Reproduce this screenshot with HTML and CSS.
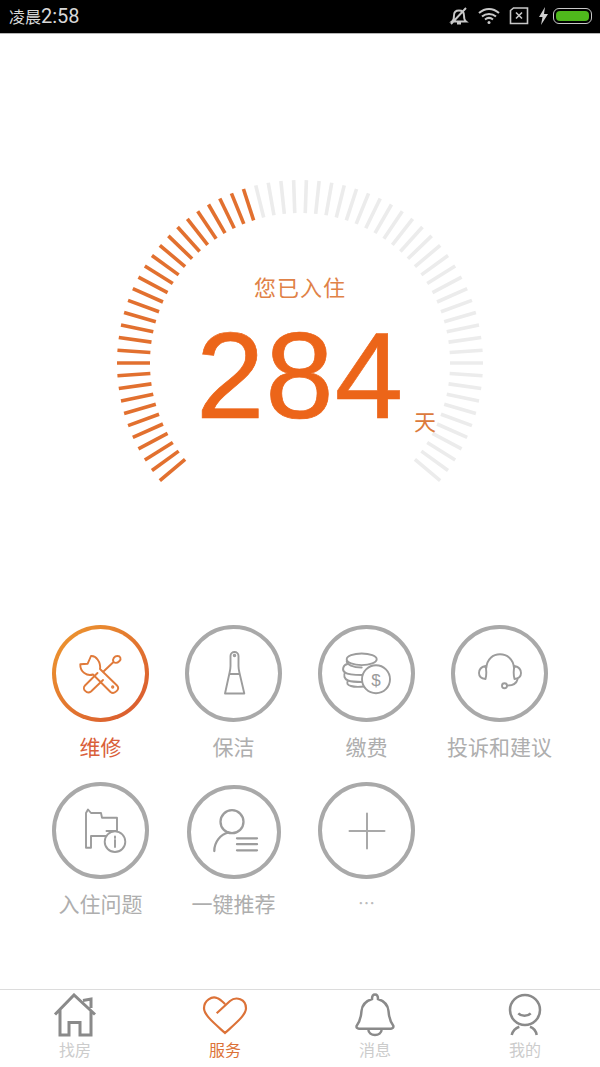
FILE: index.html
```html
<!DOCTYPE html>
<html lang="zh-CN">
<head>
    <meta charset="UTF-8">
    <meta name="viewport" content="width=device-width, initial-scale=1.0">
    <title>服务</title>
    <link rel="stylesheet" href="styles.css">
</head>
<body>
    <div class="statusbar">
        <div class="time"><span class="time-cn">凌晨</span>2:58</div>
        <div class="status-icons">
            <svg width="20" height="20" viewBox="0 0 20 20" class="st-icon st-bell">
                <path d="M3 15.500c2-1.500 2-3.500 2-6 0-3 2-5 5-5s5 2 5 5c0 2.500 0 4.500 2 6z M8 17.500h4 M2 18 17 2"/>
            </svg>
            <svg width="22" height="20" viewBox="0 0 22 20" class="st-icon st-wifi">
                <path d="M1 7c6-5.500 14-5.500 20 0 M4 10.500c4-3.500 10-3.500 14 0 M7 13.500c2.500-2 5.500-2 8 0"/>
                <circle cx="11" cy="16.500" r="1.500" class="st-fill"/>
            </svg>
            <svg width="20" height="20" viewBox="0 0 20 20" class="st-icon st-sim">
                <path d="M1.500 4.500 4.500 2h14v15.500h-17z M7 6.500l6 6 M13 6.500l-6 6"/>
            </svg>
            <svg width="9" height="18" viewBox="0 0 9 18" class="st-bolt">
                <path d="M6 0 0 10h3.500L2 18l7-11H5z"/>
            </svg>
            <div class="battery"><div class="battery-fill"></div></div>
        </div>
    </div>

    <div class="main">
        <div class="gauge">
            <svg class="gauge-ticks" width="600" height="500" viewBox="0 0 600 500">
                <defs>
                    <line id="tick" x1="-183" y1="0" x2="-150" y2="0"/>
                </defs>
                <g transform="translate(300 329)">
                    <g class="ticks-on">
                        <use href="#tick" transform="rotate(-40)"/><use href="#tick" transform="rotate(-36)"/>
                        <use href="#tick" transform="rotate(-32)"/><use href="#tick" transform="rotate(-28)"/>
                        <use href="#tick" transform="rotate(-24)"/><use href="#tick" transform="rotate(-20)"/>
                        <use href="#tick" transform="rotate(-16)"/><use href="#tick" transform="rotate(-12)"/>
                        <use href="#tick" transform="rotate(-8)"/><use href="#tick" transform="rotate(-4)"/>
                        <use href="#tick" transform="rotate(0)"/><use href="#tick" transform="rotate(4)"/>
                        <use href="#tick" transform="rotate(8)"/><use href="#tick" transform="rotate(12)"/>
                        <use href="#tick" transform="rotate(16)"/><use href="#tick" transform="rotate(20)"/>
                        <use href="#tick" transform="rotate(24)"/><use href="#tick" transform="rotate(28)"/>
                        <use href="#tick" transform="rotate(32)"/><use href="#tick" transform="rotate(36)"/>
                        <use href="#tick" transform="rotate(40)"/><use href="#tick" transform="rotate(44)"/>
                        <use href="#tick" transform="rotate(48)"/><use href="#tick" transform="rotate(52)"/>
                        <use href="#tick" transform="rotate(56)"/><use href="#tick" transform="rotate(60)"/>
                        <use href="#tick" transform="rotate(64)"/><use href="#tick" transform="rotate(68)"/>
                        <use href="#tick" transform="rotate(72)"/>
                    </g>
                    <g class="ticks-off">
                        <use href="#tick" transform="rotate(76)"/><use href="#tick" transform="rotate(80)"/>
                        <use href="#tick" transform="rotate(84)"/><use href="#tick" transform="rotate(88)"/>
                        <use href="#tick" transform="rotate(92)"/><use href="#tick" transform="rotate(96)"/>
                        <use href="#tick" transform="rotate(100)"/><use href="#tick" transform="rotate(104)"/>
                        <use href="#tick" transform="rotate(108)"/><use href="#tick" transform="rotate(112)"/>
                        <use href="#tick" transform="rotate(116)"/><use href="#tick" transform="rotate(120)"/>
                        <use href="#tick" transform="rotate(124)"/><use href="#tick" transform="rotate(128)"/>
                        <use href="#tick" transform="rotate(132)"/><use href="#tick" transform="rotate(136)"/>
                        <use href="#tick" transform="rotate(140)"/><use href="#tick" transform="rotate(144)"/>
                        <use href="#tick" transform="rotate(148)"/><use href="#tick" transform="rotate(152)"/>
                        <use href="#tick" transform="rotate(156)"/><use href="#tick" transform="rotate(160)"/>
                        <use href="#tick" transform="rotate(164)"/><use href="#tick" transform="rotate(168)"/>
                        <use href="#tick" transform="rotate(172)"/><use href="#tick" transform="rotate(176)"/>
                        <use href="#tick" transform="rotate(180)"/><use href="#tick" transform="rotate(184)"/>
                        <use href="#tick" transform="rotate(188)"/><use href="#tick" transform="rotate(192)"/>
                        <use href="#tick" transform="rotate(196)"/><use href="#tick" transform="rotate(200)"/>
                        <use href="#tick" transform="rotate(204)"/><use href="#tick" transform="rotate(208)"/>
                        <use href="#tick" transform="rotate(212)"/><use href="#tick" transform="rotate(216)"/>
                        <use href="#tick" transform="rotate(220)"/>
                    </g>
                </g>
            </svg>
            <div class="gauge-label">您已入住</div>
            <div class="gauge-days">284</div>
            <div class="gauge-unit">天</div>
        </div>

        <div class="services">
            <div class="service active">
                <div class="circle">
                    <svg width="48" height="48" viewBox="0 0 48 48" class="line-icon">
                        <path d="M14 6C19 5.500 24 12 23 19L40 35.500c3.500 3.500-2.500 9.500-6.500 6.500L16 24.500C10 26.500 3 22 3.300 14.300L10.700 13.700z"/>
                        <path d="M20.500 23 8 35.500c-3.500 3.500 2 9 6 6L26 30 M26.500 21.500 36.500 12 M36.500 12c-1.500-3 1-6 4-6s4 3 2 5-4 2.500-6 1z"/>
                        <circle cx="35.700" cy="37" r=".7"/>
                    </svg>
                </div>
                <div class="service-name">维修</div>
            </div>
            <div class="service">
                <div class="circle">
                    <svg width="48" height="48" viewBox="0 0 48 48" class="line-icon">
                        <path d="M20.500 6a4 4 0 0 1 8 0v10c0 3 .5 5 1 7l4.800 20.500H15L19.500 23c.5-2 1-4 1-7z M19.500 24h10"/>
                        <circle cx="24.500" cy="5.500" r=".8"/>
                    </svg>
                </div>
                <div class="service-name">保洁</div>
            </div>
            <div class="service">
                <div class="circle">
                    <svg width="50" height="50" viewBox="0 0 50 50" class="line-icon">
                        <ellipse cx="19.700" cy="10.300" rx="15" ry="5.800"/>
                        <path d="M4.700 12c0 3.500 6 6.500 15 6.500"/>
                        <path d="M5.500 15C1 16 -.5 21 3 23.500 5 25 12 26 20 26"/>
                        <path d="M3 23.500C1.500 26 2 30 6 31.500 9 32.500 14 33 20 33"/>
                        <path d="M6 31.500C4.500 34 5 36 9 37 12 38 17 38 22 37.500"/>
                        <circle cx="34" cy="30.300" r="14" class="coin"/>
                        <text x="34" y="36.500" class="coin-sign">$</text>
                    </svg>
                </div>
                <div class="service-name">缴费</div>
            </div>
            <div class="service">
                <div class="circle">
                    <svg width="50" height="50" viewBox="0 0 50 50" class="line-icon">
                        <path d="M11.300 19C12 10 18 5.300 25 5.300S38.300 10 39 19"/>
                        <path d="M10.500 17C6 18 4 21 4 24s2 5.500 6.500 6c1-4 1-9 0-13z M39.500 17c4.500 1 6.500 4 6.500 7s-2 5.500-6.500 6c-1-4-1-9 0-13z"/>
                        <path d="M42.500 30.500c-1 4-5 6-10 6"/>
                        <circle cx="29.500" cy="36.700" r="2.500"/>
                    </svg>
                </div>
                <div class="service-name">投诉和建议</div>
            </div>
            <div class="service">
                <div class="circle">
                    <svg width="48" height="48" viewBox="0 0 48 48" class="line-icon">
                        <path d="M9 6 11 2.500 14 6h10l1 4.700h15V24H29.500 M29 29H14v11.700H9V6"/>
                        <circle cx="38" cy="34.700" r="10.300"/>
                        <path d="M38 33v7 M38 29.500v1.500"/>
                    </svg>
                </div>
                <div class="service-name">入住问题</div>
            </div>
            <div class="service">
                <div class="circle small">
                    <svg width="48" height="48" viewBox="0 0 48 48" class="line-icon icon-bold">
                        <circle cx="22" cy="13.700" r="11.500"/>
                        <path d="M4.300 43c0-9 6-16.500 14-18.500 M27 30.300h20 M27 36.200h20 M27 42.300h20"/>
                    </svg>
                </div>
                <div class="service-name">一键推荐</div>
            </div>
            <div class="service">
                <div class="circle">
                    <svg width="40" height="40" viewBox="0 0 40 40" class="line-icon icon-plus">
                        <path d="M2.500 20h35 M20 2.500v35"/>
                    </svg>
                </div>
                <div class="service-name service-more">⋯</div>
            </div>
        </div>
    </div>

    <div class="tabbar">
        <div class="tab">
            <svg width="50" height="44" viewBox="0 0 50 44" class="tab-icon">
                <path d="M5 21.500 24 2l21 19.500 M10 17v25h9V29.500h11V42h11V17 M33 7.500l8-1.500v9"/>
            </svg>
            <div class="tab-name">找房</div>
        </div>
        <div class="tab active">
            <svg width="50" height="44" viewBox="0 0 50 44" class="tab-icon">
                <path d="M16.700 20.300 30 8c6-5 16-2 16 7.300C46 22 36 30 25 40 14 30 4 22 4 15.300 4 7 12 3 17 5c3 1 6 4 8 6"/>
            </svg>
            <div class="tab-name">服务</div>
        </div>
        <div class="tab">
            <svg width="50" height="44" viewBox="0 0 50 44" class="tab-icon tab-icon-thin">
                <path d="M22 6c0-6 6-6 6 0 6 2 10 6 10.500 12 .5 6 1 10 4.800 14.700 .5 2-1 3-2.300 3H9c-1.500 0-3-1-2.300-3C10.500 28 11 24 11.500 18 12 12 16 8 22 6z"/>
                <path d="M18.300 36c0 8 13.400 8 13.400 0"/>
            </svg>
            <div class="tab-name">消息</div>
        </div>
        <div class="tab">
            <svg width="50" height="44" viewBox="0 0 50 44" class="tab-icon tab-icon-thin">
                <circle cx="25" cy="17" r="15"/>
                <path d="M18.300 20.300c3 3.200 9.400 3.200 12.400 0 M11.700 42c1-4 4-7 7.600-8.300 M30 33.700c3.600 1.300 6 4.300 6.700 8.300"/>
            </svg>
            <div class="tab-name">我的</div>
        </div>
    </div>
</body>
</html>
```

FILE: styles.css
```css
* {
    box-sizing: border-box;
}
body {
    margin: 0;
    padding: 0;
    height: 1067px;
    display: flex;
    flex-direction: column;
    background-color: white;
    font-family: "Liberation Sans", "Noto Sans CJK SC", sans-serif;
    overflow: hidden;
}

/* status bar */
.statusbar {
    height: 34px;
    flex: none;
    display: flex;
    justify-content: space-between;
    align-items: center;
    padding: 0 8px 1px 9px;
    background-color: black;
    border-bottom: 1px solid #b5b5b5;
}
.time {
    font-family: Roboto, "Noto Sans CJK SC", sans-serif;
    font-size: 20px;
    color: #d8d8d8;
}
.time-cn {
    font-size: 16px;
}
.status-icons {
    display: flex;
    align-items: center;
    gap: 9px;
}
.st-icon {
    fill: none;
    stroke: #c8c8c8;
    stroke-width: 1.6;
}
.st-bell {
    stroke-width: 1.9;
}
.st-wifi {
    stroke-width: 2;
}
.st-fill {
    fill: #c8c8c8;
    stroke: none;
}
.st-bolt {
    fill: #d0d0d0;
    margin-left: 1px;
    margin-right: -4px;
}
.battery {
    width: 39px;
    height: 16px;
    padding: 2px;
    border: 1px solid #c8c8c8;
    border-radius: 6px;
}
.battery-fill {
    height: 100%;
    background-color: #4fb81c;
    border-radius: 4px;
}

/* gauge */
.main {
    flex: 1;
}
.gauge {
    position: relative;
    height: 591px;
}
.gauge-ticks {
    display: block;
}
.ticks-on {
    stroke: #e2702f;
    stroke-width: 3.600;
}
.ticks-off {
    stroke: #ececec;
    stroke-width: 3.600;
}
.gauge-label {
    position: absolute;
    top: 239px;
    left: 0;
    width: 100%;
    text-align: center;
    font-size: 22px;
    line-height: 32px;
    letter-spacing: 1px;
    color: #e08247;
}
.gauge-days {
    position: absolute;
    top: 280px;
    left: 0;
    width: 100%;
    text-align: center;
    font-size: 123px;
    line-height: 123px;
    letter-spacing: 1px;
    color: #ec6519;
    -webkit-text-stroke: .7px #ec6519;
}
.gauge-unit {
    position: absolute;
    top: 373px;
    left: 414px;
    font-size: 22px;
    line-height: 32px;
    color: #dc7a3c;
}

/* service grid */
.services {
    display: grid;
    grid-template-columns: repeat(4, 133px);
    row-gap: 20px;
    padding-left: 34px;
}
.service {
    display: flex;
    flex-direction: column;
    align-items: center;
}
.circle {
    width: 97px;
    height: 97px;
    display: flex;
    justify-content: center;
    align-items: center;
    border: 4px solid #a9a9a9;
    border-radius: 50%;
}
.circle.small {
    width: 94px;
    height: 94px;
    margin-top: 3px;
}
.service.active .circle {
    border-color: transparent;
    background: linear-gradient(white, white) padding-box,
                linear-gradient(135deg, #ee9a2f, #d8552f) border-box;
}
.service-name {
    margin-top: 12px;
    font-size: 21px;
    line-height: 28px;
    color: #aeaeae;
    white-space: nowrap;
}
.service.active .service-name {
    color: #d9603a;
}
.service-more {
    font-size: 17px;
    color: #bbbbbb;
}
.line-icon {
    fill: none;
    stroke: #9c9c9c;
    stroke-width: 1.900;
    stroke-linecap: round;
    stroke-linejoin: round;
    overflow: visible;
}
.icon-bold {
    stroke-width: 2.300;
}
.icon-plus {
    stroke: #a9a9a9;
    stroke-width: 2;
}
.service.active .line-icon {
    stroke: #e07a3a;
}
.coin {
    fill: white;
}
.coin-sign {
    font-size: 17px;
    text-anchor: middle;
    fill: #9a9a9a;
    stroke: none;
}

/* bottom tabs */
.tabbar {
    height: 78px;
    flex: none;
    display: flex;
    padding-top: 3px;
    border-top: 1px solid #dcdcdc;
}
.tab {
    flex: 1;
    display: flex;
    flex-direction: column;
    align-items: center;
}
.tab-icon {
    fill: none;
    stroke: #8a8a8a;
    stroke-width: 3;
}
.tab-icon-thin {
    stroke-width: 2.500;
}
.tab.active .tab-icon {
    stroke: #dc7238;
    stroke-width: 2.200;
}
.tab-name {
    margin-top: 4px;
    font-size: 16px;
    line-height: 20px;
    color: #cccccc;
}
.tab.active .tab-name {
    color: #dc7238;
}
```
